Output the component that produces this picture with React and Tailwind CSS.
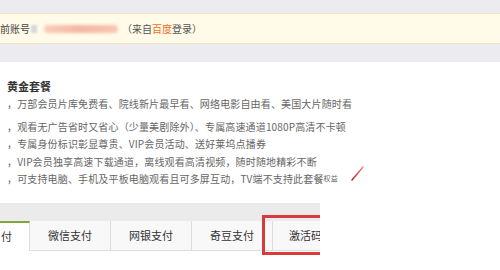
import React from 'react';

const perks = [
  '，万部会员片库免费看、院线新片最早看、网络电影自由看、美国大片随时看',
  '，观看无广告省时又省心（少量美剧除外）、专属高速通道1080P高清不卡顿',
  '，专属身份标识彰显尊贵、VIP会员活动、送好莱坞点播券',
  '，VIP会员独享高速下载通道，离线观看高清视频，随时随地精彩不断',
];

const tabs = ['微信支付', '网银支付', '奇豆支付'];

const App = () => {
  return (
    <div className="relative w-[500px] h-[270px] overflow-hidden bg-white font-['Noto_Sans_CJK_SC','Noto_Sans',sans-serif]">
      <div className="h-[13px] bg-[#ecebef]" />
      <div className="h-[31px] bg-[#fffbe8] border-y border-[#f3e4c8] flex items-center text-[10px] text-[#555] whitespace-nowrap">
        <span className="text-[#444]">前账号</span>
        <span className="ml-[1px] w-[6px] h-[8px] bg-[#d8d8d8] blur-[1px]" />
        <span className="ml-[7px] w-[74px] h-[8px] rounded bg-gradient-to-r from-[#f8cdb8] via-[#f4b7a4] to-[#f8c6b2] blur-[1.5px]" />
        <span className="ml-[4px]">（来自</span>
        <span className="text-[#f26b1d]">百度</span>
        <span>登录）</span>
      </div>
      <div className="h-[18px] bg-[#ecebef]" />

      <div className="pl-[7px] pt-[16px]">
        <div className="text-[11px] leading-[16px] font-semibold text-[#333]">黄金套餐</div>
        <div className="text-[10px] text-[#666] tracking-[0.15px] whitespace-nowrap">
          <div className="leading-[17.5px] mt-[1px] mb-[5px]">{perks[0]}</div>
          {perks.slice(1).map((p) => (
            <div key={p} className="leading-[17.5px]">{p}</div>
          ))}
          <div className="leading-[17.5px]">
            ，可支持电脑、手机及平板电脑观看且可多屏互动，TV端不支持此套餐
            <span className="text-[7px] align-top">权益</span>
          </div>
        </div>
      </div>

      <svg className="absolute left-[350px] top-[164px]" width="16" height="18" viewBox="0 0 16 18">
        <defs>
          <linearGradient id="slash" x1="0" y1="1" x2="1" y2="0">
            <stop offset="0" stopColor="#b8232b" />
            <stop offset="1" stopColor="#f08a8e" />
          </linearGradient>
        </defs>
        <path d="M2 16 L13 3" stroke="url(#slash)" strokeWidth="1.6" strokeLinecap="round" />
      </svg>

      <div className="relative w-[320px] overflow-hidden mt-[15px]">
        <div className="h-[18px] bg-[#ebebeb]" />
        <div className="flex h-[30px] bg-[#ebebeb] text-[11px] text-[#333]">
          <div className="w-[30px] shrink-0 bg-white border-t-2 border-[#7ea83a] border-r border-r-[#dddddd] flex items-center pl-[1px]">
            付
          </div>
          {tabs.map((t) => (
            <div
              key={t}
              className="w-[81px] shrink-0 bg-[#f8f8f8] border-r border-b border-[#dddddd] flex items-center justify-center"
            >
              {t}
            </div>
          ))}
          <div className="w-[80px] shrink-0 bg-[#f8f8f8] border-b border-[#dddddd] flex items-center pl-[16px]">
            激活码
          </div>
        </div>
        <div className="absolute left-[262px] top-[12px] w-[70px] h-[40px] border-[3px] border-[#d93a3e]" />
        <div className="h-[30px]" />
      </div>
    </div>
  );
};

export default App;
